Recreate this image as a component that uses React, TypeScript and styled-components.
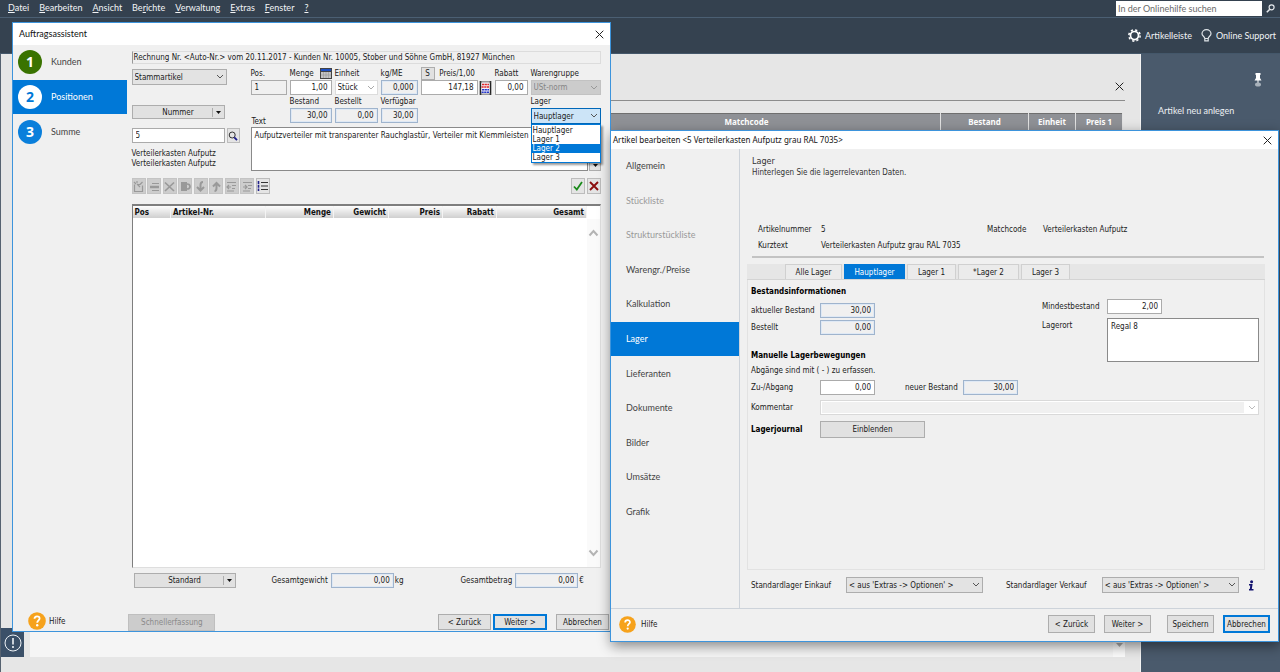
import React from "react";
import styled, { createGlobalStyle, css } from "styled-components";

const DIALOG = '"DejaVu Sans Condensed", "DejaVu Sans", sans-serif';
const SHELL = 'Lato, "Noto Sans", sans-serif';

const GlobalStyle = createGlobalStyle`
  *, *::before, *::after { box-sizing: border-box; }
  html, body { margin: 0; padding: 0; }
  body { background: #e6e6e6; font: 8px/11px ${DIALOG}; color: #1a1a1a; overflow: hidden; }
  button, input, select, textarea { font: inherit; color: inherit; margin: 0; border-radius: 0; }
  ul { list-style: none; margin: 0; padding: 0; }
  a { color: inherit; text-decoration: none; }
  svg { display: block; flex: none; }
`;

/* ---------- application shell ---------- */

const Shell = styled.div`
  position: relative;
  display: flex;
  flex-direction: column;
  min-height: 100vh;
`;

const MenuBar = styled.nav`
  display: flex;
  align-items: center;
  gap: 10px;
  height: 18px;
  padding: 0 5px 1px 8px;
  background: #34414f;
  border-bottom: 1px solid #4b5f73;
  color: #f2f4f6;
  font: 9px/14px ${SHELL};
`;

const HelpSearch = styled.form`
  display: flex;
  align-items: center;
  gap: 4px;
  margin-left: auto;
`;

const HelpInput = styled.input`
  width: 146px;
  height: 15px;
  padding: 0 2px;
  border: 0;
  background: #fff;
  font: 9px/14px ${SHELL};
  &::placeholder { color: #6a6a6a; opacity: 1; }
`;

const GhostButton = styled.button`
  display: flex;
  align-items: center;
  justify-content: center;
  padding: 0;
  border: 0;
  background: none;
  color: inherit;
`;

const ToolBar = styled.header`
  display: flex;
  align-items: center;
  justify-content: flex-end;
  gap: 9px;
  height: 36px;
  padding: 0 4px;
  background: #354250;
  border-bottom: 1px solid #44576a;
  color: #f2f4f6;
  font: 9px/14px ${SHELL};
`;

const ToolLink = styled.a`
  display: flex;
  align-items: center;
  gap: 4px;
`;

const Workspace = styled.div`
  display: flex;
  flex: 1;
`;

const Content = styled.main`
  flex: 1;
  display: flex;
  flex-direction: column;
  padding: 24px 15px 15px 0;
  border-left: 1px solid #566270;
  border-right: 1px solid #f4f4f4;
  background: #e6e6e6;
`;

const ContentHead = styled.div`
  display: flex;
  justify-content: flex-end;
  align-items: flex-start;
  height: 23px;
  margin-left: 29px;
  padding: 4px 1px 0 0;
  border-bottom: 1px solid #8c8c8c;
`;

const ListTable = styled.table`
  width: calc(100% - 31px);
  margin: 12px 2px 0 29px;
  table-layout: fixed;
  border-collapse: collapse;
  border-top: 1px solid #6f6f6f;
  th {
    height: 17px;
    padding: 0;
    background: #8f9196;
    border-right: 1px solid #e2e2e2;
    color: #fff;
    font: bold 8px/14px "Noto Sans", sans-serif;
    text-align: center;
  }
`;

const StatusArea = styled.div`
  display: flex;
  justify-content: space-between;
  align-items: flex-end;
  margin-top: auto;
  height: 29px;
`;

const StatusIcon = styled.div`
  display: flex;
  align-items: center;
  justify-content: center;
  width: 23px;
  height: 29px;
  background: #3b5068;
`;

const StatusPanel = styled.div`
  flex: 1;
  display: flex;
  justify-content: flex-end;
  margin-left: 6px;
  height: 27px;
  background: #f5f5f5;
`;

const StatusScroll = styled.div`
  width: 12px;
  padding: 13px 3px 0;
  background: #fbfbfb;
`;

const SideBar = styled.aside`
  width: 139px;
  padding: 19px 0 0 17px;
  background: #4a5a6c;
  color: #eef1f4;
  font: 9px/14px ${SHELL};
`;

const PinRow = styled.div`
  display: flex;
  justify-content: flex-end;
  height: 31px;
  margin-right: 18px;
`;

const SideLink = styled.a`
  display: block;
  height: 23px;
`;

/* ---------- windows ---------- */

const Window = styled.section<{ $top: number; $left: number; $width?: number; $height: number }>`
  position: absolute;
  top: ${(p) => p.$top}px;
  left: ${(p) => p.$left}px;
  ${(p) => (p.$width ? `width: ${p.$width}px;` : "right: 1px;")}
  min-height: ${(p) => p.$height}px;
  display: flex;
  flex-direction: column;
  border: 1px solid #3d94dc;
  background: #f0f0f0;
`;

const AssistantWindow = styled(Window)`
  max-height: 610px;
  overflow: hidden;
`;

const FrontWindow = styled(Window)`
  box-shadow: 1px 4px 12px rgba(0, 0, 0, 0.45);
`;

const TitleBar = styled.header<{ $front?: boolean }>`
  display: flex;
  align-items: center;
  justify-content: space-between;
  height: ${(p) => (p.$front ? 18 : 22)}px;
  padding: ${(p) => (p.$front ? "0 6px 0 2px" : "0 6px")};
  background: #fff;
  color: #111;
`;

const Title = styled.h1<{ $front?: boolean }>`
  margin: 0;
  font: ${(p) => (p.$front ? '8px/14px "Noto Sans", sans-serif' : `9px/14px ${SHELL}`)};
`;

const WindowBody = styled.div`
  display: flex;
  flex: 1;
`;

/* ---------- form parts ---------- */

const button = css`
  display: flex;
  align-items: center;
  justify-content: center;
  padding: 0;
  border: 1px solid #adadad;
  background: #e1e1e1;
`;

const PushButton = styled.button<{ $w: number; $h: number; $primary?: boolean }>`
  ${button}
  width: ${(p) => p.$w}px;
  height: ${(p) => p.$h}px;
  ${(p) => p.$primary && "border: 2px solid #0078d7;"}
  &:disabled { background: #cccccc; border-color: #bfbfbf; color: #8a8a8a; }
`;

const SplitButton = styled(PushButton)`
  & > span { flex: 1; padding-left: 12px; text-align: center; }
  & > i { display: flex; align-items: center; justify-content: center; width: 12px; height: 9px; border-left: 1px solid #adadad; }
`;

const Field = styled.input<{ $w?: number; $tone?: "read" | "flat"; $left?: boolean }>`
  width: ${(p) => (p.$w ? `${p.$w}px` : "100%")};
  height: 15px;
  padding: 0 3px;
  border: 1px solid #ababab;
  background: #fff;
  text-align: ${(p) => (p.$left ? "left" : "right")};
  ${(p) => p.$tone === "read" && "border-color: #9fb4cd; background: #f0f0f0; box-shadow: inset 0 0 0 1px #dfe9f5;"}
  ${(p) => p.$tone === "flat" && "background: #f0f0f0;"}
`;

const SelectBox = styled.div<{ $w?: number; $look?: "white" | "off" | "open" }>`
  position: relative;
  width: ${(p) => (p.$w ? `${p.$w}px` : "100%")};
  & > select {
    display: block;
    width: 100%;
    height: 16px;
    padding: 0 14px 0 2px;
    appearance: none;
    border: 1px solid #adadad;
    background: #e3e3e3;
    opacity: 1;
    ${(p) => p.$look === "white" && "height: 15px; background: #fff; border-color: #dcdcdc;"}
    ${(p) => p.$look === "off" && "height: 15px; background: #cccccc; border-color: #c2c2c2; color: #858585;"}
    ${(p) => p.$look === "open" && "background: #cce4f7; border-color: #0067b8;"}
  }
  & > svg { position: absolute; right: 3px; top: 5px; pointer-events: none; }
`;

const Options = styled.ul`
  position: absolute;
  z-index: 2;
  top: 16px;
  left: 0;
  right: 0;
  padding-top: 1px;
  border: 1px solid #0078d7;
  background: #fff;
  box-shadow: 2px 2px 2px rgba(0, 0, 0, 0.4);
`;

const Option = styled.li<{ $on?: boolean }>`
  padding-left: 1px;
  line-height: 9px;
  ${(p) => p.$on && "background: #0078d7; color: #fff;"}
`;

const TextBox = styled.textarea<{ $w?: number }>`
  display: block;
  ${(p) => (p.$w ? `width: ${p.$w}px;` : "flex: 1;")}
  height: 44px;
  padding: 2px 3px;
  border: 1px solid #8a8a8a;
  background: #fff;
  resize: none;
  overflow: hidden;
  white-space: pre;
`;

const Chevron = ({ color = "#555" }: { color?: string }) => (
  <svg width="8" height="6" viewBox="0 0 8 6" fill="none" stroke={color}>
    <path d="M1 1l3 3 3-3" />
  </svg>
);

const BigChevron = ({ up }: { up?: boolean }) => (
  <svg width="11" height="8" viewBox="0 0 11 8" fill="none" stroke="#b4b4b4" strokeWidth="2">
    <path d={up ? "M1.500 6.500l4-4.500 4 4.500" : "M1.500 1.500l4 4.500 4-4.500"} />
  </svg>
);

const Caret = () => (
  <svg width="5" height="3" viewBox="0 0 5 3">
    <path d="M0 0h5L2.500 3z" fill="#111" />
  </svg>
);

const CloseIcon = () => (
  <svg width="9" height="9" viewBox="0 0 9 9" fill="none" stroke="#222">
    <path d="M.7.700l7.600 7.600M8.300.7L.7 8.300" />
  </svg>
);

const HelpBadge = ({ size }: { size: number }) => (
  <svg width={size} height={size} viewBox="0 0 18 18">
    <circle cx="9" cy="9" r="8.800" fill="#f6a21c" />
    <path d="M6.500 6.800c0-3.300 5.100-3.300 5.100-.3 0 1.900-2.400 2-2.400 4.300" fill="none" stroke="#fff" strokeWidth="1.800" />
    <circle cx="9.200" cy="13.300" r="1.200" fill="#fff" />
  </svg>
);

/* ---------- order assistant ---------- */

const Steps = styled.ul`
  display: flex;
  flex-direction: column;
  gap: 1px;
  width: 115px;
`;

const Step = styled.li<{ $on?: boolean }>`
  a {
    display: flex;
    align-items: center;
    gap: 9px;
    height: 34px;
    padding-left: 5px;
    background: ${(p) => (p.$on ? "#0078d7" : "transparent")};
    color: ${(p) => (p.$on ? "#fff" : "#444")};
    font: 9px/14px ${SHELL};
  }
`;

const StepNumber = styled.span<{ $bg: string; $fg: string }>`
  display: flex;
  align-items: center;
  justify-content: center;
  width: 24px;
  height: 24px;
  border-radius: 50%;
  background: ${(p) => p.$bg};
  color: ${(p) => p.$fg};
  font: bold 14px/24px "Noto Sans", sans-serif;
`;

const AssistantMain = styled.div`
  flex: 1;
  padding: 6px 9px 0 5px;
`;

const InvoiceLine = styled.div`
  height: 13px;
  padding-left: 1px;
  border: 1px solid #dcdcdc;
  border-left-color: #999;
  line-height: 11px;
  white-space: nowrap;
`;

const EntryArea = styled.div`
  display: flex;
  gap: 11px;
  margin-top: 4px;
`;

const ArticlePick = styled.div`
  width: 108px;
  padding-top: 1px;
`;

const PickGap = styled.div<{ $top: number }>`
  display: flex;
  gap: 2px;
  margin-top: ${(p) => p.$top}px;
`;

const ArticleNames = styled.p`
  margin: 6px 0 0;
  line-height: 10px;
`;

const Position = styled.div`
  flex: 1;
`;

const FieldGrid = styled.div`
  display: grid;
  grid-template-columns: 36px 42px 43px 37px 71px 33px 1fr;
  grid-template-rows: 27px 31px;
  column-gap: 3px;
  row-gap: 1px;
`;

const Cell = styled.div<{ $col?: number }>`
  ${(p) => p.$col && `grid-column: ${p.$col};`}
  display: flex;
  flex-direction: column;
  gap: 1px;
`;

const CellHead = styled.div`
  display: flex;
  justify-content: space-between;
  align-items: center;
  height: 11px;
  white-space: nowrap;
`;

const CellRow = styled.div`
  display: flex;
  gap: 1px;
`;

const TextLabel = styled.label`
  align-self: end;
  padding-left: 1px;
`;

const SmallButton = styled.button`
  ${button}
  width: 14px;
  height: 13px;
  align-self: center;
`;

const TextRow = styled.div`
  display: flex;
  align-items: flex-end;
  gap: 1px;
`;

const MoreButton = styled.button`
  ${button}
  width: 12px;
  height: 12px;
`;

const ActionBar = styled.div`
  display: flex;
  justify-content: space-between;
  margin: 7px 0 10px;
`;

const Actions = styled.div<{ $w: number }>`
  display: flex;
  justify-content: space-between;
  width: ${(p) => p.$w}px;
`;

const IconButton = styled.button<{ $h?: number }>`
  ${button}
  width: 14px;
  height: ${(p) => p.$h ?? 16}px;
  border-color: #bcbcbc;
  background: #e4e4e4;
  &:disabled { background: #cdcdcd; border-color: #c4c4c4; }
`;

const PositionList = styled.div`
  display: flex;
  height: 364px;
  border: 1px solid #dedede;
  border-top: 2px solid #7e7e7e;
  border-left: 1px solid #7e7e7e;
  background: #fff;
`;

const PositionTable = styled.table`
  flex: 1;
  align-self: flex-start;
  width: 454px;
  table-layout: fixed;
  border-collapse: collapse;
  th {
    height: 12px;
    padding: 0 2px;
    background: linear-gradient(#fdfdfd, #cfcfcf);
    border-right: 1px solid #f4f4f4;
    text-align: right;
    font-weight: bold;
    line-height: 11px;
    color: #111;
  }
  th:nth-child(-n + 2) { text-align: left; }
`;

const ScrollTrack = styled.div`
  display: flex;
  flex-direction: column;
  align-items: center;
  justify-content: space-between;
  width: 13px;
  margin-top: 13px;
  padding: 10px 0;
  background: #fafafa;
`;

const Totals = styled.div`
  display: flex;
  align-items: center;
  height: 15px;
  margin-top: 5px;
  padding-left: 2px;
`;

const Total = styled.label<{ $ml: number }>`
  display: flex;
  align-items: center;
  gap: 3px;
  margin-left: ${(p) => p.$ml}px;
`;

const Unit = styled.span`
  margin-left: 1px;
`;

const AssistantFooter = styled.footer`
  display: flex;
  align-items: flex-start;
  height: 23px;
  padding: 6px 1px 0 15px;
`;

const HelpLink = styled.a<{ $gap: number }>`
  display: flex;
  align-items: center;
  gap: ${(p) => p.$gap}px;
`;

const QuickEntry = styled(PushButton)`
  margin-left: 63px;
`;

const FooterButtons = styled.div`
  display: flex;
  gap: 2px;
  margin-left: auto;
`;

const ButtonSpace = styled.span<{ $w: number }>`
  width: ${(p) => p.$w}px;
`;

const FooterHelp = styled.div`
  margin-top: -2px;
`;

const g = { fill: "none", stroke: "#999", strokeWidth: 1.2 };
const disabledIcons: [string, React.ReactNode][] = [
  ["Neu", <g {...g}><path d="M1.500 3.500v7h8v-6" /><path d="M5 3.500h2M1 1l2 2M4 0v2M7 3.500l2.500-2.500" /><path d="M4 3l3 3" /></g>],
  ["Einfügen", <g {...g}><path d="M3 2.500h7M3 9.500h7" /><path d="M1 6h9" strokeWidth="2.500" /></g>],
  ["Löschen", <path {...g} strokeWidth={1.700} d="M1 1.500l9 8.500M10 1.500l-9 8.500" />],
  ["Kopieren", <g><path d="M1 1h6v9H1z" fill="#999" /><path d="M7 3c4 0 4 5 0 5" {...g} strokeWidth={1.700} /></g>],
  ["Nach unten", <path {...g} strokeWidth={2} d="M8 1C6 1 5.500 2.500 5.500 4V9M2 6l3.500 3.500L9 6" />],
  ["Nach oben", <path {...g} strokeWidth={2} d="M3.500 10c2 0 2-1.500 2-3V2.500M2 5.500L5.500 2 9 5.500" />],
  ["Einrücken", <path {...g} d="M1 1.500h9M6 4.500h4M6 7.500h3M1 10h7M1 6h4M3 4L1 6l2 2" />],
  ["Ausrücken", <path {...g} d="M1 1.500h9M6 4.500h4M6 7.500h3M1 10h7M1 6h4M3 4l2 2-2 2" />],
];

const positionColumns: [string, number][] = [
  ["Pos", 38], ["Artikel-Nr.", 95], ["Menge", 68], ["Gewicht", 55], ["Preis", 54], ["Rabatt", 54], ["Gesamt", 90],
];

const Assistant = () => (
  <AssistantWindow $top={22} $left={12} $width={599} $height={610}>
    <TitleBar>
      <Title>Auftragsassistent</Title>
      <GhostButton aria-label="Schließen"><CloseIcon /></GhostButton>
    </TitleBar>
    <WindowBody>
      <Steps>
        <Step><a href="#kunden"><StepNumber $bg="#3a7300" $fg="#fff">1</StepNumber>Kunden</a></Step>
        <Step $on><a href="#positionen"><StepNumber $bg="#fff" $fg="#0078d7">2</StepNumber>Positionen</a></Step>
        <Step><a href="#summe"><StepNumber $bg="#0a7fdb" $fg="#fff">3</StepNumber>Summe</a></Step>
      </Steps>
      <AssistantMain>
        <InvoiceLine>Rechnung Nr. &lt;Auto-Nr.&gt; vom 20.11.2017 - Kunden Nr. 10005, Stober und Söhne GmbH, 81927 München</InvoiceLine>
        <EntryArea>
          <ArticlePick>
            <SelectBox $w={95}>
              <select aria-label="Artikelart"><option>Stammartikel</option></select>
              <Chevron />
            </SelectBox>
            <PickGap $top={20}>
              <SplitButton $w={93} $h={14}><span>Nummer</span><i><Caret /></i></SplitButton>
            </PickGap>
            <PickGap $top={9}>
              <Field $w={93} $left aria-label="Artikelsuche" defaultValue="5" />
              <IconButton $h={15} aria-label="Suchen">
                <svg width="10" height="10" viewBox="0 0 10 10" fill="none">
                  <circle cx="4.200" cy="4" r="3" stroke="#333" />
                  <path d="M6.300 6.300L9 9.200" stroke="#1a1a8c" strokeWidth="1.800" />
                </svg>
              </IconButton>
            </PickGap>
            <ArticleNames>Verteilerkasten Aufputz<br />Verteilerkasten Aufputz</ArticleNames>
          </ArticlePick>
          <Position>
            <FieldGrid>
              <Cell>
                <CellHead><label htmlFor="pos">Pos.</label></CellHead>
                <Field id="pos" $tone="flat" $left defaultValue="1" />
              </Cell>
              <Cell>
                <CellHead>
                  <label htmlFor="menge">Menge</label>
                  <svg width="12" height="11" viewBox="0 0 12 11">
                    <path d="M0 0h12v11H0z" fill="#444" />
                    <path d="M1 1h10v2H1z" fill="#1c4fc4" />
                    <path d="M1 4h10v6H1z" fill="#c4c4c4" />
                    <path d="M3.500 4v6M6 4v6M8.500 4v6M1 7h10" stroke="#999" strokeWidth=".6" />
                  </svg>
                </CellHead>
                <Field id="menge" defaultValue="1,00" />
              </Cell>
              <Cell>
                <CellHead><label htmlFor="einheit">Einheit</label></CellHead>
                <SelectBox $look="white"><select id="einheit"><option>Stück</option></select><Chevron color="#aaa" /></SelectBox>
              </Cell>
              <Cell>
                <CellHead><label htmlFor="kg">kg/ME</label></CellHead>
                <Field id="kg" $tone="read" readOnly value="0,000" />
              </Cell>
              <Cell>
                <CellHead>
                  <SmallButton>S</SmallButton>
                  <label htmlFor="preis">Preis/1,00</label>
                  <ButtonSpace $w={12} />
                </CellHead>
                <CellRow>
                  <Field id="preis" $w={57} defaultValue="147,18" />
                  <GhostButton aria-label="Kalkulation">
                    <svg width="13" height="14" viewBox="0 0 13 14" fill="none">
                      <path d="M1.500 0v14M11.500 0v14" stroke="#222" strokeWidth="1.600" />
                      <path d="M1 1h11M1 13h11" stroke="#444" />
                      <path d="M2.500 1.500h8v11h-8z" fill="#f4f0f8" />
                      <path d="M3 3.500h7M2.500 6h8" stroke="#e02828" strokeWidth="1.600" strokeDasharray="2.200 .5" />
                      <path d="M3 8.800h7M2.500 11.300h8" stroke="#2638c8" strokeWidth="1.500" strokeDasharray="2.200 .5" />
                    </svg>
                  </GhostButton>
                </CellRow>
              </Cell>
              <Cell>
                <CellHead><label htmlFor="rabatt">Rabatt</label></CellHead>
                <Field id="rabatt" defaultValue="0,00" />
              </Cell>
              <Cell>
                <CellHead><label htmlFor="wg">Warengruppe</label></CellHead>
                <SelectBox $look="off"><select id="wg" disabled><option>USt-norm</option></select><Chevron color="#999" /></SelectBox>
              </Cell>
              <TextLabel htmlFor="text">Text</TextLabel>
              <Cell>
                <CellHead><label htmlFor="bestand">Bestand</label></CellHead>
                <Field id="bestand" $tone="read" readOnly value="30,00" />
              </Cell>
              <Cell>
                <CellHead><label htmlFor="bestellt">Bestellt</label></CellHead>
                <Field id="bestellt" $tone="read" readOnly value="0,00" />
              </Cell>
              <Cell>
                <CellHead><label htmlFor="verf">Verfügbar</label></CellHead>
                <Field id="verf" $tone="read" readOnly value="30,00" />
              </Cell>
              <Cell $col={7}>
                <CellHead><label htmlFor="lager">Lager</label></CellHead>
                <SelectBox $look="open">
                  <select id="lager"><option>Hauptlager</option></select>
                  <Chevron />
                  <Options role="listbox" aria-label="Lager">
                    <Option role="option">Hauptlager</Option>
                    <Option role="option">Lager 1</Option>
                    <Option role="option" $on aria-selected>Lager 2</Option>
                    <Option role="option">Lager 3</Option>
                  </Options>
                </SelectBox>
              </Cell>
            </FieldGrid>
            <TextRow>
              <TextBox id="text" defaultValue="Aufputzverteiler mit transparenter Rauchglastür, Verteiler mit Klemmleisten und" />
              <MoreButton aria-label="Mehr"><Caret /></MoreButton>
            </TextRow>
          </Position>
        </EntryArea>
        <ActionBar>
          <Actions $w={138}>
            {disabledIcons.map(([name, icon]) => (
              <IconButton key={name} disabled aria-label={name}><svg width="11" height="11" viewBox="0 0 11 11">{icon}</svg></IconButton>
            ))}
            <IconButton aria-label="Nummerierung">
              <svg width="11" height="12" viewBox="0 0 11 12" fill="none">
                <path d="M4 2.500h7M4 6h7M4 9.500h7" stroke="#333" />
                <path d="M1.500 1v10" stroke="#22228c" strokeWidth="1.600" strokeDasharray="3 .7" />
              </svg>
            </IconButton>
          </Actions>
          <Actions $w={30}>
            <IconButton aria-label="Übernehmen">
              <svg width="10" height="10" viewBox="0 0 10 10" fill="none" stroke="#1a8a1a" strokeWidth="1.800"><path d="M1 5.500l2.800 3L9 1" /></svg>
            </IconButton>
            <IconButton aria-label="Verwerfen">
              <svg width="10" height="10" viewBox="0 0 10 10" fill="none" stroke="#8c0f0f" strokeWidth="1.900"><path d="M1 1l8 8M9 1L1 9" /></svg>
            </IconButton>
          </Actions>
        </ActionBar>
        <PositionList>
          <PositionTable>
            <colgroup>{positionColumns.map(([n, w]) => <col key={n} width={w} />)}</colgroup>
            <thead><tr>{positionColumns.map(([n]) => <th key={n}>{n}</th>)}</tr></thead>
          </PositionTable>
          <ScrollTrack><BigChevron up /><BigChevron /></ScrollTrack>
        </PositionList>
        <Totals>
          <SplitButton $w={102} $h={15}><span>Standard</span><i><Caret /></i></SplitButton>
          <Total $ml={36}>Gesamtgewicht<Field $w={63} $tone="read" readOnly value="0,00" /></Total>
          <Unit>kg</Unit>
          <Total $ml={57}>Gesamtbetrag<Field $w={63} $tone="read" readOnly value="0,00" /></Total>
          <Unit>€</Unit>
        </Totals>
      </AssistantMain>
    </WindowBody>
    <AssistantFooter>
      <FooterHelp><HelpLink href="#hilfe" $gap={3}><HelpBadge size={18} />Hilfe</HelpLink></FooterHelp>
      <QuickEntry $w={87} $h={17} disabled>Schnellerfassung</QuickEntry>
      <FooterButtons>
        <PushButton $w={53} $h={16}>&lt; Zurück</PushButton>
        <PushButton $w={54} $h={16} $primary>Weiter &gt;</PushButton>
        <ButtonSpace $w={5} />
        <PushButton $w={53} $h={16}>Abbrechen</PushButton>
      </FooterButtons>
    </AssistantFooter>
  </AssistantWindow>
);

/* ---------- article editor ---------- */

const Sections = styled.nav`
  width: 129px;
  border-right: 1px solid #cdd3da;
`;

const SectionList = styled.ul`
  display: flex;
  flex-direction: column;
  height: 380px;
`;

const Section = styled.li<{ $on?: boolean; $off?: boolean }>`
  flex: 1;
  a {
    display: flex;
    align-items: center;
    height: 100%;
    padding-left: 15px;
    background: ${(p) => (p.$on ? "#0078d7" : "transparent")};
    color: ${(p) => (p.$on ? "#fff" : p.$off ? "#9a9a9a" : "#444")};
    font: 9px/14px ${SHELL};
  }
`;

const EditorMain = styled.div`
  flex: 1;
  padding: 6px 13px 0 7px;
`;

const EditorHead = styled.header`
  height: 69px;
  padding-left: 5px;
  color: #333;
  h2 { margin: 0; font-size: 9px; font-weight: normal; line-height: 12px; }
  p { margin: 0; }
`;

const Facts = styled.dl`
  display: grid;
  grid-template-columns: 63px 166px 56px 1fr;
  row-gap: 5px;
  margin: 0 1px 0 5px;
  padding: 0 0 5px 6px;
  border-bottom: 2px solid #c3c3c3;
  dt, dd { margin: 0; }
`;

const Tabs = styled.div`
  display: flex;
  gap: 2px;
  height: 16px;
  margin-top: 6px;
  padding-left: 38px;
  background: #e6e6e6;
  border-bottom: 1px solid #d4d4d4;
`;

const Tab = styled.button<{ $w: number; $on?: boolean }>`
  width: ${(p) => p.$w}px;
  padding: 0;
  border: 1px solid #d0d0d0;
  border-bottom: 0;
  background: #ebebeb;
  ${(p) => p.$on && "background: #0078d7; border-color: #0078d7; color: #fff;"}
`;

const Panel = styled.div`
  display: flex;
  flex-direction: column;
  height: 290px;
  padding: 6px 5px 0 3px;
  border: 1px solid #e2e2e2;
  border-top: 0;
`;

const PanelTop = styled.div`
  display: flex;
  justify-content: space-between;
`;

const StockForm = styled.div<{ $label: number; $gap: number; $top: number }>`
  display: grid;
  grid-template-columns: ${(p) => p.$label}px auto;
  row-gap: ${(p) => p.$gap}px;
  margin-top: ${(p) => p.$top}px;
  align-content: start;
  justify-content: start;
  & > label { line-height: 15px; }
`;

const GroupTitle = styled.h3<{ $top?: number }>`
  margin: ${(p) => p.$top ?? 0}px 0 0;
  font-size: 8px;
  line-height: 11px;
  font-weight: bold;
  color: #000;
`;

const Hint = styled.p`
  margin: 4px 0 0;
`;

const MoveRow = styled.div<{ $top: number }>`
  display: flex;
  align-items: center;
  margin-top: ${(p) => p.$top}px;
`;

const MoveLabel = styled.label<{ $w: number }>`
  flex: none;
  width: ${(p) => p.$w}px;
`;

const NewStock = styled.div`
  display: flex;
  align-items: center;
  margin-left: 30px;
`;

const CommentBox = styled(SelectBox)`
  flex: 1;
  & > select { height: 15px; background: #f0f0f0; border-color: #d9d9d9; box-shadow: inset -14px 0 #fff, inset 0 0 0 1px #fff; }
`;

const Defaults = styled.div`
  display: flex;
  align-items: center;
  margin-top: 7px;
  padding-left: 4px;
`;

const DefaultField = styled.div<{ $end: number }>`
  display: flex;
  align-items: center;
  gap: 15px;
  margin-right: ${(p) => p.$end}px;
`;

const EditorFooter = styled.footer`
  display: flex;
  align-items: center;
  height: 33px;
  padding: 0 8px 2px;
  border-top: 1px solid #cdd3da;
`;

const sections: { name: string; on?: boolean; off?: boolean }[] = [
  { name: "Allgemein" }, { name: "Stückliste", off: true }, { name: "Strukturstückliste", off: true },
  { name: "Warengr./Preise" }, { name: "Kalkulation" }, { name: "Lager", on: true }, { name: "Lieferanten" },
  { name: "Dokumente" }, { name: "Bilder" }, { name: "Umsätze" }, { name: "Grafik" },
];

const tabs: [string, number][] = [["Alle Lager", 57], ["Hauptlager", 61], ["Lager 1", 49], ["*Lager 2", 61], ["Lager 3", 49]];

const ArticleEditor = () => (
  <FrontWindow $top={130} $left={610} $height={512}>
    <TitleBar $front>
      <Title $front>Artikel bearbeiten &lt;5 Verteilerkasten Aufputz grau RAL 7035&gt;</Title>
      <GhostButton aria-label="Schließen"><CloseIcon /></GhostButton>
    </TitleBar>
    <WindowBody>
      <Sections>
        <SectionList>
          {sections.map((s) => <Section key={s.name} $on={s.on} $off={s.off}><a href="#bereich">{s.name}</a></Section>)}
        </SectionList>
      </Sections>
      <EditorMain>
        <EditorHead>
          <h2>Lager</h2>
          <p>Hinterlegen Sie die lagerrelevanten Daten.</p>
        </EditorHead>
        <Facts>
          <dt>Artikelnummer</dt><dd>5</dd><dt>Matchcode</dt><dd>Verteilerkasten Aufputz</dd>
          <dt>Kurztext</dt><dd>Verteilerkasten Aufputz grau RAL 7035</dd>
        </Facts>
        <Tabs role="tablist">
          {tabs.map(([name, w]) => (
            <Tab key={name} role="tab" $w={w} $on={name === "Hauptlager"} aria-selected={name === "Hauptlager"}>{name}</Tab>
          ))}
        </Tabs>
        <Panel>
          <PanelTop>
            <div>
              <GroupTitle>Bestandsinformationen</GroupTitle>
              <StockForm $label={69} $gap={2} $top={6}>
                <label htmlFor="akt">aktueller Bestand</label><Field id="akt" $w={55} $tone="read" readOnly value="30,00" />
                <label htmlFor="best2">Bestellt</label><Field id="best2" $w={55} $tone="read" readOnly value="0,00" />
              </StockForm>
              <GroupTitle $top={15}>Manuelle Lagerbewegungen</GroupTitle>
              <Hint>Abgänge sind mit ( - ) zu erfassen.</Hint>
            </div>
            <StockForm $label={65} $gap={4} $top={13}>
              <label htmlFor="mind">Mindestbestand</label><Field id="mind" $w={55} defaultValue="2,00" />
              <label htmlFor="ort">Lagerort</label><TextBox id="ort" $w={152} defaultValue="Regal 8" />
            </StockForm>
          </PanelTop>
          <MoveRow $top={4}>
            <MoveLabel $w={69} htmlFor="zu">Zu-/Abgang</MoveLabel><Field id="zu" $w={55} defaultValue="0,00" />
            <NewStock><MoveLabel $w={58} htmlFor="neu">neuer Bestand</MoveLabel><Field id="neu" $w={55} $tone="read" readOnly value="30,00" /></NewStock>
          </MoveRow>
          <MoveRow $top={5}>
            <MoveLabel $w={69} htmlFor="komm">Kommentar</MoveLabel>
            <CommentBox><select id="komm"><option /></select><Chevron color="#bbb" /></CommentBox>
          </MoveRow>
          <MoveRow $top={6}>
            <MoveLabel as="div" $w={69}><GroupTitle>Lagerjournal</GroupTitle></MoveLabel>
            <PushButton $w={105} $h={17}>Einblenden</PushButton>
          </MoveRow>
        </Panel>
        <Defaults>
          <DefaultField $end={23}>
            <label htmlFor="ek">Standardlager Einkauf</label>
            <SelectBox $w={137}><select id="ek"><option>&lt; aus 'Extras -&gt; Optionen' &gt;</option></select><Chevron /></SelectBox>
          </DefaultField>
          <DefaultField $end={9}>
            <label htmlFor="vk">Standardlager Verkauf</label>
            <SelectBox $w={137}><select id="vk"><option>&lt; aus 'Extras -&gt; Optionen' &gt;</option></select><Chevron /></SelectBox>
          </DefaultField>
          <svg width="6" height="11" viewBox="0 0 6 11">
            <circle cx="3.600" cy="1.700" r="1.500" fill="#12126e" />
            <path d="M1 4h3.600L3.800 9H5.500v1.500H1V9h.8l.5-3.500H1z" fill="#12126e" />
          </svg>
        </Defaults>
      </EditorMain>
    </WindowBody>
    <EditorFooter>
      <HelpLink href="#hilfe" $gap={5}><HelpBadge size={17} />Hilfe</HelpLink>
      <FooterButtons>
        <PushButton $w={47} $h={18}>&lt; Zurück</PushButton>
        <ButtonSpace $w={5} />
        <PushButton $w={47} $h={18}>Weiter &gt;</PushButton>
        <ButtonSpace $w={12} />
        <PushButton $w={47} $h={18}>Speichern</PushButton>
        <ButtonSpace $w={5} />
        <PushButton $w={47} $h={18} $primary>Abbrechen</PushButton>
      </FooterButtons>
    </EditorFooter>
  </FrontWindow>
);

export default function App() {
  return (
    <>
      <GlobalStyle />
      <Shell>
        <MenuBar>
          <a href="#datei"><u>D</u>atei</a>
          <a href="#bearbeiten"><u>B</u>earbeiten</a>
          <a href="#ansicht"><u>A</u>nsicht</a>
          <a href="#berichte">Be<u>r</u>ichte</a>
          <a href="#verwaltung"><u>V</u>erwaltung</a>
          <a href="#extras"><u>E</u>xtras</a>
          <a href="#fenster"><u>F</u>enster</a>
          <a href="#info"><u>?</u></a>
          <HelpSearch>
            <HelpInput aria-label="Onlinehilfe" placeholder="In der Onlinehilfe suchen" />
            <GhostButton type="button" aria-label="Suchen">
              <svg width="9" height="9" viewBox="0 0 9 9" fill="none" stroke="#e6eaee" strokeWidth="1.200">
                <circle cx="5.600" cy="3.300" r="2.500" /><path d="M3.800 5.200L.8 8.200" strokeWidth="1.600" />
              </svg>
            </GhostButton>
          </HelpSearch>
        </MenuBar>
        <ToolBar>
          <ToolLink href="#artikelleiste">
            <svg width="13" height="13" viewBox="0 0 12 12" fill="none" stroke="#fff">
              <circle cx="6" cy="6" r="3.700" strokeWidth="1.600" />
              <circle cx="6" cy="6" r="5.200" strokeWidth="1.400" strokeDasharray="2.040 2.040" />
            </svg>
            Artikelleiste
          </ToolLink>
          <ToolLink href="#support">
            <svg width="11" height="13" viewBox="0 0 11 13" fill="none" stroke="#dfe4e8" strokeWidth="1.200">
              <path d="M3.800 9.500C3.800 7.500 1 7 1 4.800a4.500 4.200 0 0 1 9 0C10 7 7.200 7.500 7.200 9.500zM3.800 9.500v2.300h3.400V9.500" />
            </svg>
            Online Support
          </ToolLink>
        </ToolBar>
        <Workspace>
          <Content>
            <ContentHead><GhostButton aria-label="Ansicht schließen"><CloseIcon /></GhostButton></ContentHead>
            <ListTable>
              <colgroup><col /><col width="388" /><col width="88" /><col width="47" /><col width="47" /></colgroup>
              <thead><tr><th /><th>Matchcode</th><th>Bestand</th><th>Einheit</th><th>Preis 1</th></tr></thead>
            </ListTable>
            <StatusArea>
              <StatusIcon>
                <svg width="18" height="18" viewBox="0 0 18 18" fill="none" stroke="#eef2f6">
                  <circle cx="9" cy="9" r="8" /><path d="M9 4v6.500M9 12v2" strokeWidth="1.600" />
                </svg>
              </StatusIcon>
              <StatusPanel><StatusScroll><svg width="7" height="4" viewBox="0 0 7 4"><path d="M0 0h7L3.500 4z" fill="#aaa" /></svg></StatusScroll></StatusPanel>
            </StatusArea>
          </Content>
          <SideBar>
            <PinRow>
              <svg width="8" height="15" viewBox="0 0 8 15">
                <path d="M1.500 0h5v2H6v3l1.500 2.500h-7L2 5V2h-.5z" fill="#fff" />
                <path d="M4 7v3" stroke="#fff" />
                <ellipse cx="4" cy="11.500" rx="3" ry="2" fill="#a9b2bb" />
              </svg>
            </PinRow>
            <SideLink href="#neu">Artikel neu anlegen</SideLink>
            <SideLink href="#warengruppe">Warengruppe anlegen</SideLink>
          </SideBar>
        </Workspace>
      </Shell>
      <Assistant />
      <ArticleEditor />
    </>
  );
}
